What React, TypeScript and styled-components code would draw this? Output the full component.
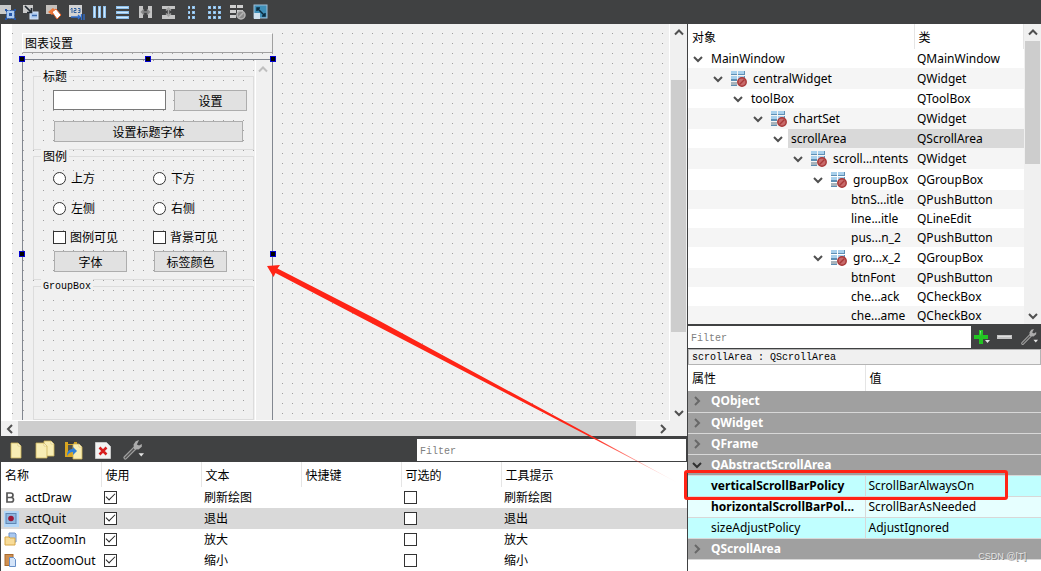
import React from "react";
import styled, { createGlobalStyle, css } from "styled-components";

const UI = `"Noto Sans", "Noto Sans CJK SC", sans-serif`;
const CJK = `"Noto Sans CJK SC", sans-serif`;
const MONO = `"Liberation Mono", "Noto Sans CJK SC", monospace`;
const DARK = "#404142";
const RED = "#ff2416";

const Global = createGlobalStyle`
  *, *::before, *::after { box-sizing: border-box; }
  html, body { margin: 0; background: #fff; }
  body { font: 12px/16px ${UI}; color: #000; }
  button, input { font: inherit; color: inherit; margin: 0; padding: 0; border-radius: 0; }
  table { border-collapse: collapse; border-spacing: 0; table-layout: fixed; width: 100%; }
  th, td { padding: 0; text-align: left; white-space: nowrap; overflow: hidden; }
  svg { display: block; }
`;

const Shell = styled.div`
  position: relative;
  display: flex;
  flex-direction: column;
  height: 100vh;
  overflow: hidden;
`;
const TopBar = styled.header`
  flex: none;
  display: flex;
  align-items: center;
  gap: 7px;
  height: 24px;
  background: ${DARK};
`;
const IconButton = styled.button`
  display: flex;
  align-items: center;
  justify-content: center;
  flex: none;
  min-width: 16px;
  border: 0;
  background: none;
`;
const Workspace = styled.main`
  flex: 1;
  display: flex;
  min-height: 0;
`;
const LeftPane = styled.div`
  flex: 1;
  display: flex;
  flex-direction: column;
  min-width: 0;
  border-left: 1px solid ${DARK};
`;
const RightPane = styled.aside`
  flex: none;
  display: flex;
  flex-direction: column;
  width: 354px;
  border-left: 1px solid ${DARK};
  background: #fff;
`;

/* ---------- form editor ---------- */

const Editor = styled.section`
  flex: 1;
  display: flex;
  min-height: 0;
  background: #f0f0f0;
`;
/* designer grid: one dot every ten pixels */
const dots = (x: number, y: number) => css`
  background-image: conic-gradient(from 0deg at 1px 1px, transparent 270deg, #a0a0a0 0);
  background-size: 10px 10px;
  background-position: ${x}px ${y}px;
`;
const Canvas = styled.div`
  flex: 1;
  min-width: 0;
  overflow: hidden;
  border-left: 11px solid #fff;
  border-right: 1px solid #fff;
  border-bottom: 1px solid #fff;
  padding: 9px 10px 0;
  background-color: #f0f0f0;
  ${dots(0, 9)}
`;
const ToolBox = styled.div`
  width: 251px;
`;
const ToolBoxTab = styled.div`
  height: 20px;
  padding: 0 2px;
  border: 1px solid;
  border-color: #fff #a0a0a0 #a0a0a0 #fff;
  background: #f0f0f0;
  font: 12px/18px ${CJK};
`;
const Frame = styled.div`
  position: relative;
  display: flex;
  height: 390px;
  margin-top: 6px;
  border: 1px solid #828790;
  background: #f0f0f0;
`;
const FrameContent = styled.div`
  flex: 1;
  min-width: 0;
  padding: 9px 1px 0 10px;
  background-color: #f0f0f0;
  ${dots(0, 0)}
`;
const FrameScroll = styled.div`
  flex: none;
  width: 17px;
  padding-top: 5px;
  border-left: 1px solid #fff;
  background: #f0f0f0;
`;
const Selection = styled.div`
  position: absolute;
  inset: -1px;
  pointer-events: none;
`;
const Handle = styled.span<{ $x: string; $y: string }>`
  position: absolute;
  left: ${(p) => p.$x};
  top: ${(p) => p.$y};
  width: 6px;
  height: 6px;
  margin: -3px;
  border: 1px solid #0000d0;
  background: #000;
`;
const Group = styled.fieldset<{ $h: number }>`
  height: ${(p) => p.$h}px;
  min-width: 0;
  margin: 0;
  padding: 0 0 0 19px;
  border: 1px solid #dcdcdc;
  font: 12px/14px ${CJK};
  & + & {
    margin-top: -1px;
  }
  legend {
    height: 14px;
    margin-left: -12px;
    padding: 0 2px;
    background: #f0f0f0;
  }
`;
const MonoLegend = styled.legend`
  font: 10px/16px ${MONO};
`;
const TitleFields = styled.div`
  display: grid;
  grid-template-columns: 113px 74px;
  gap: 10px 7px;
  padding-top: 7px;
`;
const LineEdit = styled.input`
  height: 20px;
  padding: 0 3px;
  border: 1px solid #7a7a7a;
  background: #fff;
`;
const PushButton = styled.button<{ $wide?: boolean }>`
  width: ${(p) => (p.$wide ? 189 : 73)}px;
  height: 21px;
  border: 1px solid #adadad;
  background: #e1e1e1;
  font: 12px/18px ${CJK};
  margin-left: 1px;
  ${(p) => p.$wide && "grid-column: 1 / -1;"}
`;
const LegendFields = styled.div`
  display: grid;
  grid-template-columns: 100px 1fr;
  grid-template-rows: 30px 30px 28px 21px;
  align-items: center;
`;
const Choice = styled.label<{ $check?: boolean }>`
  display: flex;
  align-items: center;
  gap: ${(p) => (p.$check ? 4 : 5)}px;
  height: 18px;
  font: 12px/18px ${CJK};
`;
const Radio = styled.input`
  appearance: none;
  width: 13px;
  height: 13px;
  border: 1px solid #333;
  border-radius: 50%;
  background: #fff;
`;
const Check = styled.input`
  appearance: none;
  position: relative;
  display: block;
  flex: none;
  width: 13px;
  height: 13px;
  border: 1px solid #333;
  background: #fff;
  &:checked::after {
    content: "";
    position: absolute;
    inset: 1px 0 3px 1px;
    width: 9px;
    height: 5px;
    border: solid #222;
    border-width: 0 0 1px 1px;
    transform: rotate(-45deg);
  }
`;

/* ---------- scroll bars ---------- */

const ScrollBar = styled.div<{ $dir: "row" | "column" }>`
  flex: none;
  display: flex;
  flex-direction: ${(p) => p.$dir};
  ${(p) => (p.$dir === "row" ? "height: 15px; margin-right: 16px;" : "width: 17px; padding: 0 1px;")}
  background: #f0f0f0;
`;
const ScrollButton = styled.button<{ $dir: "row" | "column" }>`
  flex: none;
  display: flex;
  align-items: center;
  justify-content: center;
  width: ${(p) => (p.$dir === "row" ? 17 : 15)}px;
  height: ${(p) => (p.$dir === "row" ? 15 : 17)}px;
  border: 0;
  background: none;
`;
const Part = styled.div<{ $grow: number; $thumb?: boolean }>`
  flex: ${(p) => p.$grow} 1 0;
  background: ${(p) => (p.$thumb ? "#cdcdcd" : "transparent")};
`;
const HBarRow = styled.div`
  flex: none;
  background: #f0f0f0;
  border-bottom: 1px solid ${DARK};
`;

const chevrons = {
  up: "M1 6.5 5 2.5 9 6.5",
  down: "M1 3 5 7 9 3",
  left: "M7 1 3 5 7 9",
  right: "M3 1 7 5 3 9",
};
const Chevron = ({ d, color = "#505050" }: { d: keyof typeof chevrons; color?: string }) => (
  <svg width="10" height="10" viewBox="0 0 10 10" aria-hidden>
    <path d={chevrons[d]} fill="none" stroke={color} strokeWidth="2" />
  </svg>
);
const Bar = ({ dir, parts }: { dir: "row" | "column"; parts: [number, number, number] }) => {
  const row = dir === "row";
  return (
    <ScrollBar $dir={dir}>
      <ScrollButton $dir={dir} aria-label="scroll back">
        <Chevron d={row ? "left" : "up"} />
      </ScrollButton>
      <Part $grow={parts[0]} />
      <Part $grow={parts[1]} $thumb />
      <Part $grow={parts[2]} />
      <ScrollButton $dir={dir} aria-label="scroll forward">
        <Chevron d={row ? "right" : "down"} />
      </ScrollButton>
    </ScrollBar>
  );
};

/* ---------- action editor ---------- */

const ActionBar = styled.div`
  flex: none;
  display: flex;
  align-items: center;
  height: 25px;
  padding: 1px 1px 1px 5px;
  background: ${DARK};
`;
const ActionTools = styled.div`
  flex: 411 1 0;
  display: flex;
  gap: 9px;
`;
const FilterInput = styled.input<{ $grow: number }>`
  flex: ${(p) => p.$grow} 1 0;
  min-width: 0;
  height: 22px;
  padding: 3px 3px 0;
  border: 0;
  outline: 0;
  background: #fff;
  font: 10px/16px ${MONO};
  &::placeholder {
    color: #808080;
    opacity: 1;
  }
`;
const ActionTable = styled.table`
  flex: none;
  background: #fff;
  th {
    height: 25px;
    padding-left: 4px;
    border-right: 1px solid #e5e5e5;
    font: 12px/18px ${CJK};
  }
  th:last-child {
    border-right: 0;
  }
  td {
    height: 21px;
    padding-left: 3px;
  }
`;
const ActionRow = styled.tr<{ $on?: boolean }>`
  background: ${(p) => (p.$on ? "#d9d9d9" : "#fff")};
`;
const NameCell = styled.div`
  display: flex;
  align-items: center;
  gap: 6px;
  font-size: 12px;
`;

/* ---------- object inspector ---------- */

const Inspector = styled.section`
  flex: none;
  display: flex;
  height: 300px;
  overflow: hidden;
`;
const TreeScroll = styled.div`
  flex: 1;
  min-width: 0;
`;
const TreeTable = styled.table`
  th {
    height: 25px;
    padding-left: 4px;
    border-right: 1px solid #e5e5e5;
    font: 12px/18px ${CJK};
  }
`;
const TreeRow = styled.tr<{ $alt?: boolean; $icon?: boolean }>`
  height: ${(p) => (p.$icon ? 21 : 19)}px;
  background: ${(p) => (p.$alt ? "#f5f5f5" : "#fff")};
`;
const TreeCell = styled.td<{ $on?: boolean }>`
  ${(p) => p.$on && "background: #d9d9d9;"}
  padding-left: 3px;
`;
const TreeName = styled.div<{ $depth: number; $icon?: boolean; $on?: boolean }>`
  display: flex;
  align-items: center;
  height: ${(p) => (p.$icon ? 21 : 19)}px;
  padding-left: ${(p) => p.$depth * 20 + 5}px;
  background: ${(p) =>
    p.$on ? `linear-gradient(90deg, #fff ${p.$depth * 20 + 20}px, #d9d9d9 0)` : "transparent"};
  svg {
    flex: none;
  }
`;
const Twisty = styled.span<{ $icon?: boolean }>`
  flex: none;
  width: ${(p) => (p.$icon ? 18 : 15)}px;
`;
const TreeLabel = styled.span<{ $icon?: boolean }>`
  padding-left: ${(p) => (p.$icon ? 6 : 3)}px;
`;

/* ---------- property editor ---------- */

const PropBar = styled.div`
  flex: none;
  display: flex;
  align-items: center;
  height: 25px;
  padding: 1px 1px 1px 0;
  background: ${DARK};
`;
const PropTools = styled.div`
  flex: none;
  display: flex;
  gap: 7px;
  padding-left: 3px;
  width: 69px;
`;
const ObjectLine = styled.div`
  flex: none;
  height: 16px;
  padding: 1px 3px 0;
  border: 1px solid #b4b4b4;
  background: #f0f0f0;
  font: 10px/14px ${MONO};
`;
const PropTable = styled.table`
  th {
    height: 26px;
    padding-left: 4px;
    font: 12px/18px ${CJK};
  }
  th + th {
    border-left: 1px solid #e5e5e5;
  }
  td {
    height: 21px;
    border-bottom: 1px solid #d8d8d8;
  }
  td + td {
    padding-left: 3px;
    border-left: 1px solid #d8d8d8;
  }
`;
const GroupRow = styled.tr`
  background: #a0a0a0;
  color: #fff;
  font-weight: bold;
`;
const PropRow = styled.tr<{ $bg: string; $bold?: boolean }>`
  background: ${(p) => p.$bg};
  td:first-child {
    padding-left: 23px;
    font-weight: ${(p) => (p.$bold ? "bold" : "normal")};
  }
`;
const GroupName = styled.div`
  display: flex;
  align-items: center;
  gap: 9px;
  padding-left: 4px;
`;
const MarkedBox = styled.div`
  position: absolute;
  right: 33px;
  top: 470px;
  width: 324px;
  height: 30px;
  border: 3px solid ${RED};
  border-radius: 3px;
  pointer-events: none;
`;
const Arrow = styled.svg`
  position: absolute;
  left: 0;
  top: 0;
  pointer-events: none;
`;
const Watermark = styled.span`
  position: absolute;
  right: 15px;
  bottom: 8px;
  font: 9px/14px "Liberation Sans", sans-serif;
  color: #e4e4e4;
  text-shadow: 1px 1px 0 #808080;
`;

/* ---------- icons ---------- */

const Svg = ({
  w = 16,
  h = 16,
  size,
  children,
}: {
  w?: number;
  h?: number;
  size?: number;
  children: React.ReactNode;
}) => (
  <svg width={size ?? w} height={size ?? h} viewBox={`0 0 ${w} ${h}`} aria-hidden>
    {children}
  </svg>
);
const Rects = ({ list, fill }: { list: number[][]; fill: string }) => (
  <>
    {list.map(([x, y, w, h], i) => (
      <rect key={i} x={x} y={y} width={w} height={h} fill={fill} />
    ))}
  </>
);
const BLUE = "#8fc0ea";
const PALE = "#cfe8fc";
/* blue bar with a lighter core */
const Bars = ({ list }: { list: number[][] }) => (
  <>
    <Rects fill={BLUE} list={list} />
    <Rects fill={PALE} list={list.map(([x, y, w, h]) => [x + 1, y + 1, Math.max(1, w - 2), Math.max(1, h - 2)])} />
  </>
);
const topIcons: [string, React.ReactNode][] = [
  ["Edit widgets", <>
    <rect x="0" y="1" width="11" height="9" fill="#c9c9c9" />
    <rect x="6.5" y="6.5" width="8" height="8" fill="#a9c8f0" stroke="#2f5fae" strokeDasharray="2 1" />
    <rect x="9" y="9" width="3" height="3" fill="#2455a8" />
    <Rects fill="#2455a8" list={[[5, 5, 2, 2], [14, 5, 2, 2], [5, 14, 2, 2], [14, 14, 2, 2]]} />
  </>],
  ["Edit signals", <>
    <rect x="0" y="1" width="10" height="8" fill="#c9c9c9" />
    <rect x="7" y="8" width="8" height="7" fill="#b3cdf0" stroke="#d8e6f8" />
    <path d="M9 11.500h5" stroke="#3a69ae" strokeWidth="1.500" />
    <path d="M2 2 8 8M8.500 4v4.500H4" fill="none" stroke="#202830" strokeWidth="1.700" />
  </>],
  ["Edit buddies", <>
    <rect x="0" y="1" width="11" height="9" fill="#c4c0bc" />
    <path d="m2 8 5-4 3 3-4 4z" fill="#f0793a" />
    <path d="m6 8 4-3 5 6-4 4z" fill="#fff" stroke="#e8662c" />
  </>],
  ["Edit tab order", <>
    <rect x="0" y="1" width="13" height="12" fill="#d3d3d3" />
    <path d="M1.500 5.500 3 4v5M5 4.500h2V6.500H5v2h2.500M9 4.500h2v2H9.500M11 6.500v2H9" fill="none" stroke="#2f5f9f" />
    <path d="M2 13h9M9 11l2 2-2 2M12.500 10v6M15 10v6" fill="none" stroke="#2f6fd0" strokeWidth="1.300" />
  </>],
  ["Lay out horizontally", <Bars list={[[1, 2, 3, 12], [6, 2, 3, 12], [11, 2, 3, 12]]} />],
  ["Lay out vertically", <Bars list={[[1, 2, 13, 3], [1, 7, 13, 3], [1, 12, 13, 3]]} />],
  ["Horizontal splitter", <>
    <Rects fill="#c4c4c4" list={[[1, 2, 4, 12], [10, 2, 4, 12]]} />
    <path d="M3 8h9M6 5.500 3.500 8 6 10.500M9 5.500 11.500 8 9 10.500" fill="none" stroke="#8a8a8a" strokeWidth="1.500" />
  </>],
  ["Vertical splitter", <>
    <Rects fill="#c4c4c4" list={[[1, 2, 13, 3], [1, 11, 13, 4]]} />
    <path d="M7.500 4v8M5 6.500 7.500 4 10 6.500M5 9.500 7.500 12 10 9.500" fill="none" stroke="#a0a0a0" strokeWidth="1.500" />
  </>],
  ["Form layout", <Bars list={[[4, 2, 2, 3], [8, 2, 3, 3], [4, 7, 2, 3], [8, 7, 3, 3], [4, 12, 2, 3], [8, 12, 3, 3]]} />],
  ["Grid layout", <Bars list={[[1, 2, 3, 3], [6, 2, 3, 3], [11, 2, 3, 3], [1, 7, 3, 3], [6, 7, 3, 3], [11, 7, 3, 3], [1, 12, 3, 3], [6, 12, 3, 3], [11, 12, 3, 3]]} />],
  ["Break layout", <>
    <Rects fill="#cfcfcf" list={[[0, 1, 6, 3], [7, 1, 6, 3], [0, 6, 6, 3], [7, 6, 6, 3], [0, 11, 6, 3]]} />
    <circle cx="11" cy="11" r="4" fill="#8a8a8a" stroke="#b4b4b4" strokeWidth="1.500" />
    <path d="m8.500 13.500 5-5" stroke="#b4b4b4" strokeWidth="1.500" />
  </>],
  ["Adjust size", <>
    <rect x="1" y="1" width="13" height="13" fill="#3f8fb8" stroke="#9fbfd8" />
    <rect x="1" y="9" width="6" height="6" fill="#cfe2f0" />
    <path d="M4 4l8 8M4 7V4h3M12 9v3H9" fill="none" stroke="#0b2c40" strokeWidth="1.500" />
  </>],
];
const Wrench = ({ size }: { size: number }) => (
  <Svg w={20} h={20} size={size}>
    <path d="M3 17 12 8" stroke="#a0a0a0" strokeWidth="3.500" strokeLinecap="round" />
    <path d="M3 17 12 8" stroke="#505050" strokeWidth="1.300" strokeLinecap="round" />
    <path d="M15.500 1 12.500 2 10.500 5 11 9 15 9.500 18 7 18 4.500 15.500 6 13.500 5z" fill="#acacac" />
    <path d="M15 13h5l-2.500 3z" fill="#e4e4e4" />
  </Svg>
);
const Page = ({ x, y, w = 10 }: { x: number; y: number; w?: number }) => (
  <>
    <path d={`M${x} ${y}h${w - 3}l3 3v12h-${w}z`} fill="#f8edb4" stroke="#cdb45c" strokeWidth=".8" />
    <path d={`M${x + w - 3} ${y}v3h3z`} fill="#fffbe6" stroke="#cdb45c" strokeWidth=".5" />
  </>
);
const actionIcons: [string, React.ReactNode][] = [
  ["New", <Svg w={20} h={20}><Page x={5} y={3} /></Svg>],
  ["Copy", <Svg w={20} h={20}><Page x={9} y={1} /><Page x={1} y={3} w={11} /></Svg>],
  ["Paste", <Svg w={20} h={20}>
    <rect x="1" y="2" width="12" height="15" fill="#d9a520" />
    <rect x="4" y="1" width="6" height="3" fill="#3b3b3b" />
    <rect x="4" y="5" width="6" height="6" fill="#52514a" />
    <Page x={9} y={4} w={9} />
    <path d="M3 16c0-5 2-7 6-7V7l4 4-4 4v-3c-3 0-4 1-6 4z" fill="#2f7fd8" />
  </Svg>],
  ["Delete", <Svg w={20} h={20}>
    <path d="M2.500 2.500h11l4 4v12h-15z" fill="#f2f2f2" stroke="#c8c8c8" />
    <path d="m6.500 7.500 7 7M13.500 7.500l-7 7" stroke="#d81e1e" strokeWidth="2.500" />
  </Svg>],
  ["Configure", <Wrench size={22} />],
];
const LayoutIcon = () => (
  <Svg>
    <Rects fill="#5f8fb4" list={[[0, 0, 6, 4], [7, 0, 7, 4], [0, 5, 6, 5], [7, 5, 7, 5], [0, 11, 6, 4]]} />
    <Rects fill="#a8d0ec" list={[[0, 0, 6, 3], [7, 0, 6, 3], [0, 5, 6, 3], [7, 5, 6, 3]]} />
    <Rects fill="#a9b4bc" list={[[0, 11, 6, 3]]} />
    <circle cx="11" cy="11" r="4.200" fill="#c86a6a" stroke="#a83838" strokeWidth="1.500" />
    <path d="m8.500 13.500 5-5" stroke="#a83838" strokeWidth="1.500" />
  </Svg>
);
const rowIcons: React.ReactNode[] = [
  <Svg w={15}><path d="M3 3h3.500q2.500 0 2.500 2.200T6.500 7.500H3zM3 7.500h4q2.500 0 2.500 2.300T7 12H3z" fill="none" stroke="#555" strokeWidth="1.700" /></Svg>,
  <Svg w={15}>
    <rect width="15" height="16" fill="#b4d8f8" />
    <rect x="2" y="2.500" width="10" height="10" fill="#8fb8e0" stroke="#5f86b4" />
    <circle cx="7" cy="7.500" r="2.800" fill="#9c1838" />
  </Svg>,
  <Svg w={15}>
    <path d="M5 1h6l1 1v8H5z" fill="#a9c8f0" stroke="#7094c8" />
    <path d="M1 5h4l1 1h5v7H1z" fill="#f8dc98" stroke="#d8a848" />
  </Svg>,
  <Svg w={15}>
    <rect x="1" y="1.500" width="8" height="11" fill="#d09050" stroke="#a86c30" />
    <path d="M5.500 4.500h4l2 2v7h-6z" fill="#d4e4f8" stroke="#6890c8" />
  </Svg>,
];

/* ---------- data ---------- */

const actions: [string, string][] = [
  ["actDraw", "刷新绘图"],
  ["actQuit", "退出"],
  ["actZoomIn", "放大"],
  ["actZoomOut", "缩小"],
];
type Node = { n: string; c: string; d: number; icon?: boolean; leaf?: boolean; on?: boolean };
const tree: Node[] = [
  { n: "MainWindow", c: "QMainWindow", d: 0 },
  { n: "centralWidget", c: "QWidget", d: 1, icon: true },
  { n: "toolBox", c: "QToolBox", d: 2 },
  { n: "chartSet", c: "QWidget", d: 3, icon: true },
  { n: "scrollArea", c: "QScrollArea", d: 4, on: true },
  { n: "scroll...ntents", c: "QWidget", d: 5, icon: true },
  { n: "groupBox", c: "QGroupBox", d: 6, icon: true },
  { n: "btnS...itle", c: "QPushButton", d: 7, leaf: true },
  { n: "line...itle", c: "QLineEdit", d: 7, leaf: true },
  { n: "pus...n_2", c: "QPushButton", d: 7, leaf: true },
  { n: "gro...x_2", c: "QGroupBox", d: 6, icon: true },
  { n: "btnFont", c: "QPushButton", d: 7, leaf: true },
  { n: "che...ack", c: "QCheckBox", d: 7, leaf: true },
  { n: "che...ame", c: "QCheckBox", d: 7, leaf: true },
];
const groups = ["QObject", "QWidget", "QFrame", "QAbstractScrollArea"];

const PropGroup = ({ name, open }: { name: string; open?: boolean }) => (
  <GroupRow>
    <td colSpan={2}>
      <GroupName>
        <Chevron d={open ? "down" : "right"} color={open ? "#303030" : "#686868"} />
        {name}
      </GroupName>
    </td>
  </GroupRow>
);

export default function App() {
  return (
    <Shell>
      <Global />
      <TopBar>
        {topIcons.map(([label, art]) => (
          <IconButton key={label} aria-label={label}>
            <Svg>{art}</Svg>
          </IconButton>
        ))}
      </TopBar>
      <Workspace>
        <LeftPane>
          <Editor>
            <Canvas>
              <ToolBox>
                <ToolBoxTab>图表设置</ToolBoxTab>
                <Frame>
                  <FrameContent>
                    <Group $h={81}>
                      <legend>标题</legend>
                      <TitleFields>
                        <LineEdit aria-label="标题" />
                        <PushButton>设置</PushButton>
                        <PushButton $wide>设置标题字体</PushButton>
                      </TitleFields>
                    </Group>
                    <Group $h={131}>
                      <legend>图例</legend>
                      <LegendFields>
                        {["上方", "下方", "左侧", "右侧"].map((t) => (
                          <Choice key={t}>
                            <Radio type="radio" name="position" />
                            {t}
                          </Choice>
                        ))}
                        {["图例可见", "背景可见"].map((t) => (
                          <Choice key={t} $check>
                            <Check type="checkbox" />
                            {t}
                          </Choice>
                        ))}
                        <PushButton>字体</PushButton>
                        <PushButton>标签颜色</PushButton>
                      </LegendFields>
                    </Group>
                    <Group $h={141}>
                      <MonoLegend>GroupBox</MonoLegend>
                    </Group>
                  </FrameContent>
                  <FrameScroll>
                    <Svg w={16} h={8}>
                      <path d="M3 6.500 7 2.500 11 6.500" fill="none" stroke="#bfbfbf" strokeWidth="2" />
                    </Svg>
                  </FrameScroll>
                  <Selection>
                    <Handle $x="0" $y="0" />
                    <Handle $x="50%" $y="0" />
                    <Handle $x="100%" $y="0" />
                    <Handle $x="0" $y="50%" />
                    <Handle $x="100%" $y="50%" />
                  </Selection>
                </Frame>
              </ToolBox>
            </Canvas>
            <Bar dir="column" parts={[39, 251, 72]} />
          </Editor>
          <HBarRow>
            <Bar dir="row" parts={[0, 618, 18]} />
          </HBarRow>
          <ActionBar>
            <ActionTools>
              {actionIcons.map(([label, art]) => (
                <IconButton key={label} aria-label={label}>
                  {art}
                </IconButton>
              ))}
            </ActionTools>
            <FilterInput $grow={263} placeholder="Filter" aria-label="Filter actions" />
          </ActionBar>
          <ActionTable>
            <colgroup>
              <col width="100" />
              <col width="100" />
              <col width="100" />
              <col width="100" />
              <col width="100" />
              <col />
            </colgroup>
            <thead>
              <tr>
                {["名称", "使用", "文本", "快捷键", "可选的", "工具提示"].map((h) => (
                  <th key={h}>{h}</th>
                ))}
              </tr>
            </thead>
            <tbody>
              {actions.map(([name, text], i) => (
                <ActionRow key={name} $on={i === 1}>
                  <td>
                    <NameCell>
                      {rowIcons[i]}
                      {name}
                    </NameCell>
                  </td>
                  <td>
                    <Check type="checkbox" defaultChecked aria-label={`${name} 使用`} />
                  </td>
                  <td>{text}</td>
                  <td />
                  <td>
                    <Check type="checkbox" aria-label={`${name} 可选的`} />
                  </td>
                  <td>{text}</td>
                </ActionRow>
              ))}
            </tbody>
          </ActionTable>
        </LeftPane>
        <RightPane>
          <Inspector>
            <TreeScroll>
              <TreeTable>
                <colgroup>
                  <col width="226" />
                  <col />
                </colgroup>
                <thead>
                  <tr>
                    <th>对象</th>
                    <th>类</th>
                  </tr>
                </thead>
                <tbody>
                  {tree.map((t, i) => (
                    <TreeRow key={i} $alt={i % 2 === 1} $icon={t.icon}>
                      <td>
                        <TreeName $depth={t.d} $icon={t.icon} $on={t.on}>
                          <Twisty $icon={t.icon}>{!t.leaf && <Chevron d="down" />}</Twisty>
                          {t.icon && <LayoutIcon />}
                          <TreeLabel $icon={t.icon}>{t.n}</TreeLabel>
                        </TreeName>
                      </td>
                      <TreeCell $on={t.on}>{t.c}</TreeCell>
                    </TreeRow>
                  ))}
                </tbody>
              </TreeTable>
            </TreeScroll>
            <Bar dir="column" parts={[0, 123, 143]} />
          </Inspector>
          <PropBar>
            <FilterInput $grow={1} placeholder="Filter" aria-label="Filter properties" />
            <PropTools>
              <IconButton aria-label="Add property">
                <Svg>
                  <path d="M5 1h4v5h5v4H9v5H5v-5H0V6h5z" fill="#22c522" />
                  <path d="M6 2h1v5H1V7h6" fill="#8af08a" />
                  <path d="M11 11h5l-2.500 3z" fill="#e4e4e4" />
                </Svg>
              </IconButton>
              <IconButton aria-label="Remove property">
                <Svg>
                  <rect x="0" y="6" width="15" height="4" fill="#c4c4c4" />
                  <rect x="1" y="7" width="13" height="1" fill="#e0e0e0" />
                </Svg>
              </IconButton>
              <IconButton aria-label="Configure properties">
                <Wrench size={18} />
              </IconButton>
            </PropTools>
          </PropBar>
          <ObjectLine>scrollArea : QScrollArea</ObjectLine>
          <PropTable>
            <colgroup>
              <col width="177" />
              <col />
            </colgroup>
            <thead>
              <tr>
                <th>属性</th>
                <th>值</th>
              </tr>
            </thead>
            <tbody>
              {groups.map((g) => (
                <PropGroup key={g} name={g} open={g === "QAbstractScrollArea"} />
              ))}
              <PropRow $bg="#c0ffff" $bold>
                <td>verticalScrollBarPolicy</td>
                <td>ScrollBarAlwaysOn</td>
              </PropRow>
              <PropRow $bg="#e6ffff" $bold>
                <td>horizontalScrollBarPol...</td>
                <td>ScrollBarAsNeeded</td>
              </PropRow>
              <PropRow $bg="#c0ffff">
                <td>sizeAdjustPolicy</td>
                <td>AdjustIgnored</td>
              </PropRow>
              <PropGroup name="QScrollArea" />
            </tbody>
          </PropTable>
        </RightPane>
      </Workspace>
      <Arrow width="700" height="500" viewBox="0 0 700 500" aria-hidden>
        <defs>
          <linearGradient id="fade" gradientUnits="userSpaceOnUse" x1="590" y1="436" x2="680" y2="484">
            <stop offset="0" stopColor={RED} />
            <stop offset="1" stopColor={RED} stopOpacity="0" />
          </linearGradient>
        </defs>
        <path d="M267 266 280 265 277.500 268.500 376 319 600 440.500 679 483.500 600 442 375 325 275.500 273 273.500 277z" fill="url(#fade)" />
      </Arrow>
      <MarkedBox />
      <Watermark>CSDN @[T]</Watermark>
    </Shell>
  );
}
